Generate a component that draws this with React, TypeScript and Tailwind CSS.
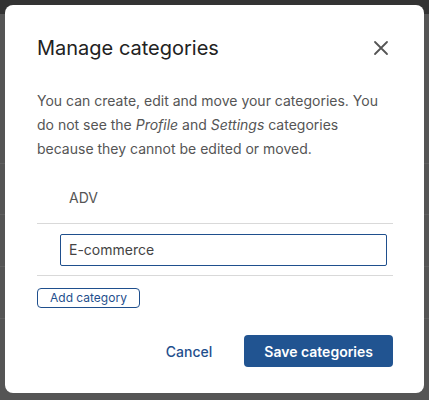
export default function App() {
  return (
    <div
      className="relative h-[400px] w-[429px] overflow-hidden bg-[#555555]"
      style={{ fontFamily: 'Inter, "Noto Sans", sans-serif' }}
    >
      {/* page behind the overlay */}
      <div className="h-[14px] bg-[#333333]" />
      <div className="absolute left-0 top-[163px] h-px w-[429px] bg-[#606060]" />
      <div className="absolute left-0 top-[214px] h-px w-[429px] bg-[#606060]" />
      <div className="absolute left-0 top-[266px] h-px w-[429px] bg-[#606060]" />
      <div className="absolute left-0 top-[318px] h-px w-[429px] bg-[#606060]" />

      <div className="absolute left-[5px] top-[5px] flex h-[388px] w-[419px] flex-col rounded-lg bg-white pl-8 pr-[31px] pt-[29px]">
        <div className="flex items-center justify-between">
          <h2 className="text-[20px] leading-7 text-[#222222]">Manage categories</h2>
          <button className="mr-[4px] text-[#555555]">
            <svg width="16" height="16" viewBox="0 0 16 16" fill="none" stroke="currentColor" strokeWidth="1.8" strokeLinecap="round">
              <path d="M2 2L14 14M14 2L2 14" />
            </svg>
          </button>
        </div>

        <p className="mt-[27px] text-[14px] leading-6 text-[#555555]">
          You can create, edit and move your categories. You do not see the <em>Profile</em> and{' '}
          <em>Settings</em> categories because they cannot be edited or moved.
        </p>

        <div className="mt-[11px]">
          <div className="flex h-[52px] items-center border-b border-[#d9d9d9] pl-8 text-[14px] text-[#555555]">
            ADV
          </div>
          <div className="flex h-[52px] items-center border-b border-[#d9d9d9] pl-[23px] pr-[6px]">
            <input
              defaultValue="E-commerce"
              className="h-8 w-full rounded-[2px] border border-[#1f4f8d] px-2 text-[14px] text-[#444444] outline-none"
            />
          </div>
        </div>

        <div className="mt-3 flex">
          <button className="h-[20px] rounded-[4px] border border-[#1f4f8d] px-3 text-[12px] leading-none text-[#1f4f8d]">
            Add category
          </button>
        </div>

        <div className="mt-[27px] flex items-center justify-end gap-8">
          <button className="text-[14px] font-medium text-[#1f4f8d]">Cancel</button>
          <button className="h-8 rounded-[4px] bg-[#215491] px-[20px] text-[14px] font-semibold text-white">
            Save categories
          </button>
        </div>
      </div>
    </div>
  );
}
